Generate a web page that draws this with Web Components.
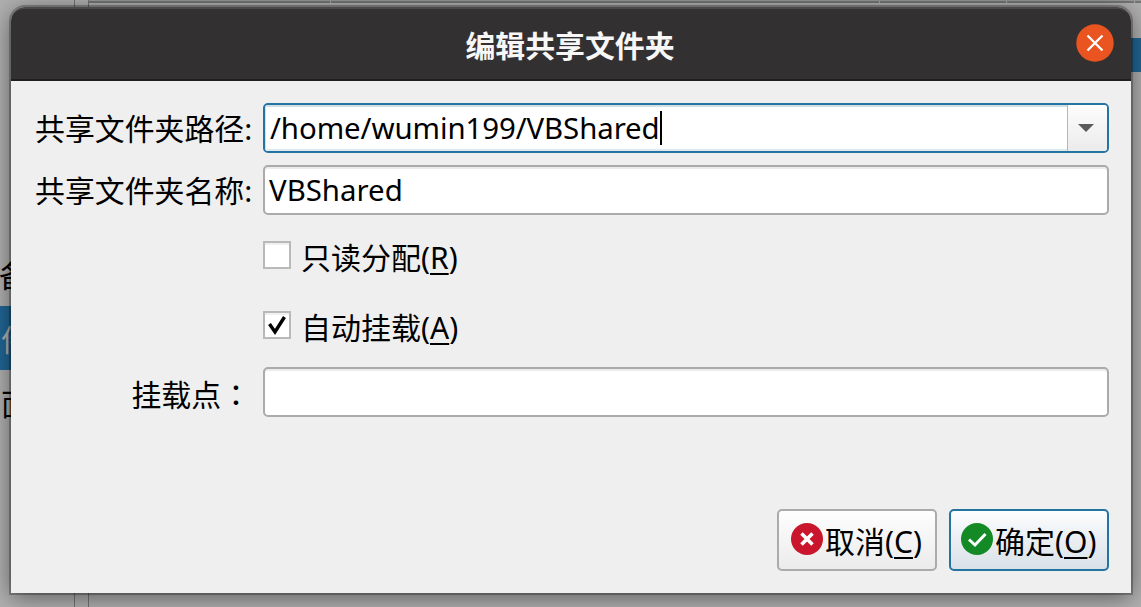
<!DOCTYPE html>
<html lang="zh-CN">
<head>
<meta charset="utf-8">
<title>编辑共享文件夹</title>
<style>
html,body{margin:0;width:1141px;height:607px;overflow:hidden}
body{font-family:"Noto Sans","Noto Sans CJK SC",sans-serif;font-size:30px;color:#000}
</style>
</head>
<body>
<settings-backdrop>
<share-dialog heading="编辑共享文件夹">
<form-row label="共享文件夹路径:"><path-combo value="/home/wumin199/VBShared"></path-combo></form-row>
<form-row label="共享文件夹名称:"><text-field value="VBShared"></text-field></form-row>
<check-option key="R">只读分配</check-option>
<check-option key="A" checked>自动挂载</check-option>
<form-row label="挂载点：" wide><text-field value=""></text-field></form-row>
<dialog-button slot="actions" key="C" kind="cancel">取消</dialog-button>
<dialog-button slot="actions" key="O" kind="ok">确定</dialog-button>
</share-dialog>
</settings-backdrop>
<script>
function define(name, render) {
  customElements.define(name, class extends HTMLElement {
    connectedCallback() {
      if (!this.shadowRoot) this.attachShadow({mode: 'open'}).innerHTML = render(this);
    }
  });
}

define('settings-backdrop', () => `<style>
:host{display:block;position:relative;width:1141px;height:607px;background:#b0b0b0;overflow:hidden}
.page{display:grid;grid-template-columns:75px 1fr;height:607px}
nav{border-right:1px solid #747474;padding-top:242px;overflow:hidden;font-family:"Noto Sans CJK SC",sans-serif;line-height:64px}
nav div{height:64px;padding-left:1px;box-sizing:border-box}
nav .sel{background:#216694;color:#b0b0b0}
main{margin-left:13px;border-left:1px solid #747474}
.head{display:grid;grid-template-columns:242px 549px 127px 128px 1fr;height:3px;background:#747676;border-top:1px solid #989a9a;box-sizing:border-box}
.head i{border-right:1px solid #a8a8a8}
.row{margin-top:35px;height:34px;background:#216694}
.over{position:absolute;left:11px;top:7px}
</style><div class="page"><nav><div style="margin-left:-2px">备</div><div class="sel">件</div><div>面</div></nav>
<main><div class="head"><i></i><i></i><i></i><i></i></div><div class="row"></div></main></div>
<div class="over"><slot></slot></div>`);

define('share-dialog', el => `<style>
:host{display:block;width:1120px;border-radius:14px 14px 0 0;background:#efefef;box-shadow:0 0 0 2px rgba(0,0,0,.25),0 4px 24px rgba(0,0,0,.5)}
header{display:grid;grid-template-columns:56px 1fr 55px;align-items:center;height:74px;box-sizing:border-box;background:#333031;border-top:2px solid #4a4848;border-bottom:2px solid #201e1f;border-radius:14px 14px 0 0;color:#f7f7f7}
h1{grid-column:2;margin:0;text-align:center;font:700 29.9px/40px "Noto Sans CJK SC",sans-serif;padding:0 3px 0 0}
svg{display:block;margin-bottom:2px}
section{height:512px;box-sizing:border-box;padding:20px 22px 22px 24px;display:flex;flex-direction:column}
footer{margin-top:auto;display:flex;justify-content:flex-end;gap:12px}
</style><header><h1>${el.getAttribute('heading')}</h1>
<svg width="38" height="38" viewBox="0 0 38 38"><circle cx="19" cy="19" r="18.7" fill="#e95420"/><path d="M11.5 11.5l15 15m0-15l-15 15" stroke="#fff" stroke-width="2.3"/></svg></header>
<section><slot></slot><footer><slot name="actions"></slot></footer></section>`);

define('form-row', el => `<style>
:host{display:grid;grid-template-columns:216px 1fr;column-gap:12px;height:50px;margin-bottom:12px;align-items:center}
label{text-align:right;white-space:nowrap;font-size:29.9px;line-height:50px;padding-top:3px}
:host([wide]) label{font-family:"Noto Sans CJK TC",sans-serif}
</style><label ${el.hasAttribute('wide') ? 'lang="zh-TW"' : ''}>${el.getAttribute('label')}</label><slot></slot>`);

define('text-field', el => `<style>
:host{display:block;height:50px;box-sizing:border-box;border:2px solid #ababab;border-radius:5px;background:#fff;box-shadow:inset 0 2px #ececec;line-height:46px;padding-left:4px}
span{font-size:29.4px;white-space:nowrap}
</style><span>${el.getAttribute('value')}</span>`);

define('path-combo', el => `<style>
:host{display:grid;grid-template-columns:1fr 39px;height:50px;box-sizing:border-box;border:2px solid #2474a2;border-radius:5px;background:#fff;overflow:hidden}
.edit{display:flex;align-items:center;padding-left:5px;border-right:1px solid #b6b6b6;box-shadow:inset 1px 2px #cfe0ea,inset 0 -2px #dfeaf0;line-height:46px;white-space:nowrap}
span{font-size:29.4px;letter-spacing:-.08px}
i{width:2px;height:34px;background:#000}
.arrow{display:grid;place-items:center;padding-right:3px;background:linear-gradient(#fdfdfd,#ebebeb)}
</style><div class="edit"><span>${el.getAttribute('value')}</span><i></i></div>
<div class="arrow"><svg width="16" height="8"><path d="M0 0h16l-8 8z" fill="#5b5b5b"/></svg></div>`);

define('check-option', el => `<style>
:host{display:flex;height:70px;padding-left:228px;align-items:flex-start;line-height:44px}
.box{width:28px;height:28px;box-sizing:border-box;border:2px solid #b9b9b9;background:#fff;box-shadow:inset 0 2px #f0f0f0;margin:16px 10px 0 0}
svg{display:block}
span{padding-top:11px}u{text-decoration-thickness:2px;text-underline-offset:4px;text-decoration-skip-ink:none}
</style><div class="box">${el.hasAttribute('checked') ? '<svg width="24" height="24"><path d="M4.500 11l5.500 8 9.500-15" fill="none" stroke="#000" stroke-width="3.4"/></svg>' : ''}</div><span><slot></slot>(<u>${el.getAttribute('key')}</u>)</span>`);

define('dialog-button', el => {
  const ok = el.getAttribute('kind') === 'ok';
  return `<style>
:host{display:flex;align-items:center;box-sizing:border-box;width:160px;height:62px;padding-left:${ok ? 10 : 12}px;border:2px solid ${ok ? '#2474a2' : '#ababab'};border-radius:5px;background:linear-gradient(${ok ? '#fcfdfe,#d9e1e8' : '#fefefe,#ebebeb'});line-height:44px;white-space:nowrap}
svg{flex:none;margin:0 2px 2px 0}span{padding-top:4px}u{text-decoration-thickness:2px;text-underline-offset:4px;text-decoration-skip-ink:none}
</style><svg width="32" height="32"><circle cx="16" cy="16" r="16" fill="${ok ? '#138a25' : '#c9162c'}"/><path d="${ok ? 'M8 16.5l6 5.5 10.500-11' : 'M10.500 10.500l11 11m0-11l-11 11'}" fill="none" stroke="#fff" stroke-width="${ok ? 3 : 3.6}"/></svg><span><slot></slot>(<u>${el.getAttribute('key')}</u>)</span>`;
});
</script>
</body>
</html>
